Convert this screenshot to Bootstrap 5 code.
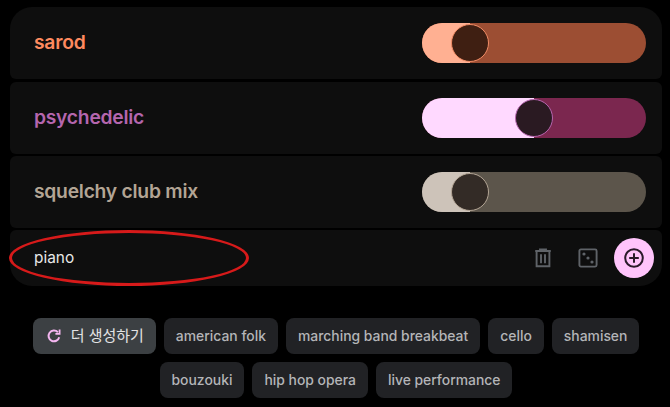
<!DOCTYPE html>
<html lang="ko">
<head>
    <meta charset="UTF-8">
    <meta name="viewport" content="width=device-width, initial-scale=1">
    <title>Prompt mixer</title>
    <link href="https://cdn.jsdelivr.net/npm/bootstrap@5.3.0/dist/css/bootstrap.min.css" rel="stylesheet">
    <style>
        body { background: #000; font-family: Inter, "Noto Sans CJK KR", sans-serif; overflow: hidden; }
        .mixer { width: 652px; margin: 7px 0 0 10px; }
        .mix-row { background: #0e0e0e; height: 72px; border-radius: 6px; margin-bottom: 3px; padding: 0 16px 0 24px; }
        .mix-row:first-child { border-top-left-radius: 22px; border-top-right-radius: 22px; }
        .mix-row.second { margin-bottom: 2px; }
        .mix-row.third { margin-bottom: 2px; }
        .mix-name { font-size: 19.3px; font-weight: 600; letter-spacing: -0.25px; margin-top: -2px; }
        .slide-track { width: 224px; height: 40px; border-radius: 20px; overflow: hidden; position: relative; }
        .slide-fill { height: 100%; }
        .slide-knob { position: absolute; top: 1px; width: 38px; height: 38px; border-radius: 50%; border: 1px solid; }
        .input-row { background: #0e0e0e; height: 56px; border-radius: 6px 6px 22px 22px; padding: 0 8px 0 24px; position: relative; }
        .input-text { color: #e8e8e8; font-size: 15.4px; margin-top: -1px; }
        .add-btn { width: 40px; height: 40px; border-radius: 50%; background: #ffc4fb; border: 0; padding: 0; margin-left: 6px; }
        .tool-btn { width: 40px; height: 40px; background: none; border: 0; padding: 0; margin-left: 5px; }
        .red-ring { position: absolute; left: -1px; top: 0; width: 240px; height: 56px; border: 3px solid #d71a1a; border-radius: 50%; pointer-events: none; }
        .chip-area { width: 610px; margin: 32px 0 0 31px; gap: 8px; }
        .chip-btn { height: 36px; background: #212225; color: #b4b5b8; border: 0; border-radius: 8px; font-size: 13.9px; font-weight: 500; padding: 0 12px; white-space: nowrap; }
        .chip-btn.more { background: #3c4043; color: #e3e3e3; padding: 0 12px 0 13px; font-size: 15px; font-weight: 400; }
        .chip-btn.more svg { margin-right: 9px; }
    </style>
</head>
<body>

<div class="mixer">
    <div class="mix-row d-flex align-items-center justify-content-between">
        <span class="mix-name" style="color:#ff8a5f">sarod</span>
        <div class="slide-track" style="background:#9c4e33">
            <div class="slide-fill" style="width:48px;background:#ffb092"></div>
            <div class="slide-knob" style="left:29px;background:#3f1f12;border-color:#f08c66"></div>
        </div>
    </div>
    <div class="mix-row second d-flex align-items-center justify-content-between">
        <span class="mix-name" style="color:#b566ae">psychedelic</span>
        <div class="slide-track" style="background:#7b274f">
            <div class="slide-fill" style="width:112px;background:#ffd9ff"></div>
            <div class="slide-knob" style="left:93px;background:#2a1a22;border-color:#b566ae"></div>
        </div>
    </div>
    <div class="mix-row third d-flex align-items-center justify-content-between">
        <span class="mix-name" style="color:#b3a595">squelchy club mix</span>
        <div class="slide-track" style="background:#5c554b">
            <div class="slide-fill" style="width:48px;background:#cdc3b9"></div>
            <div class="slide-knob" style="left:29px;background:#332b26;border-color:#b3a595"></div>
        </div>
    </div>
    <div class="input-row d-flex align-items-center">
        <span class="input-text flex-grow-1">piano</span>
        <button class="tool-btn d-flex align-items-center justify-content-center" aria-label="삭제">
            <svg width="20" height="20" viewBox="0 0 20 20" fill="none" stroke="#5f6368" stroke-width="1.9">
                <path d="M2.2 3h15.6M7 3V1.4h6V3M3.6 3v15.2h12.8V3M8 6.2v9M12 6.2v9"/>
            </svg>
        </button>
        <button class="tool-btn d-flex align-items-center justify-content-center" aria-label="랜덤">
            <svg width="20" height="20" viewBox="0 0 20 20" fill="none">
                <rect x="1.4" y="1.4" width="17.2" height="17.2" rx="1.5" stroke="#5f6368" stroke-width="1.9"/>
                <circle cx="6" cy="6" r="1.6" fill="#5f6368"/>
                <circle cx="10" cy="10" r="1.6" fill="#5f6368"/>
                <circle cx="14" cy="14" r="1.6" fill="#5f6368"/>
            </svg>
        </button>
        <button class="add-btn d-flex align-items-center justify-content-center" aria-label="추가">
            <svg width="20" height="20" viewBox="0 0 20 20" fill="none" stroke="#2a1a2a" stroke-width="2">
                <circle cx="10" cy="10" r="8.8"/>
                <path d="M10 5.2v9.6M5.2 10h9.6"/>
            </svg>
        </button>
        <div class="red-ring"></div>
    </div>
</div>

<div class="chip-area d-flex flex-wrap justify-content-center">
    <button class="chip-btn more d-flex align-items-center">
        <svg width="16" height="16" viewBox="0 0 16 16" fill="none" stroke="#f4b6f0" stroke-width="2">
            <path d="M13.2 9.2A5.4 5.4 0 1 1 11.9 4.2"/>
            <path d="M13.6 1.6v4.2H9.4" stroke-width="1.8"/>
        </svg>
        더 생성하기
    </button>
    <button class="chip-btn">american folk</button>
    <button class="chip-btn">marching band breakbeat</button>
    <button class="chip-btn">cello</button>
    <button class="chip-btn">shamisen</button>
    <button class="chip-btn">bouzouki</button>
    <button class="chip-btn">hip hop opera</button>
    <button class="chip-btn">live performance</button>
</div>

<script src="https://cdn.jsdelivr.net/npm/bootstrap@5.3.0/dist/js/bootstrap.bundle.min.js"></script>
</body>
</html>
